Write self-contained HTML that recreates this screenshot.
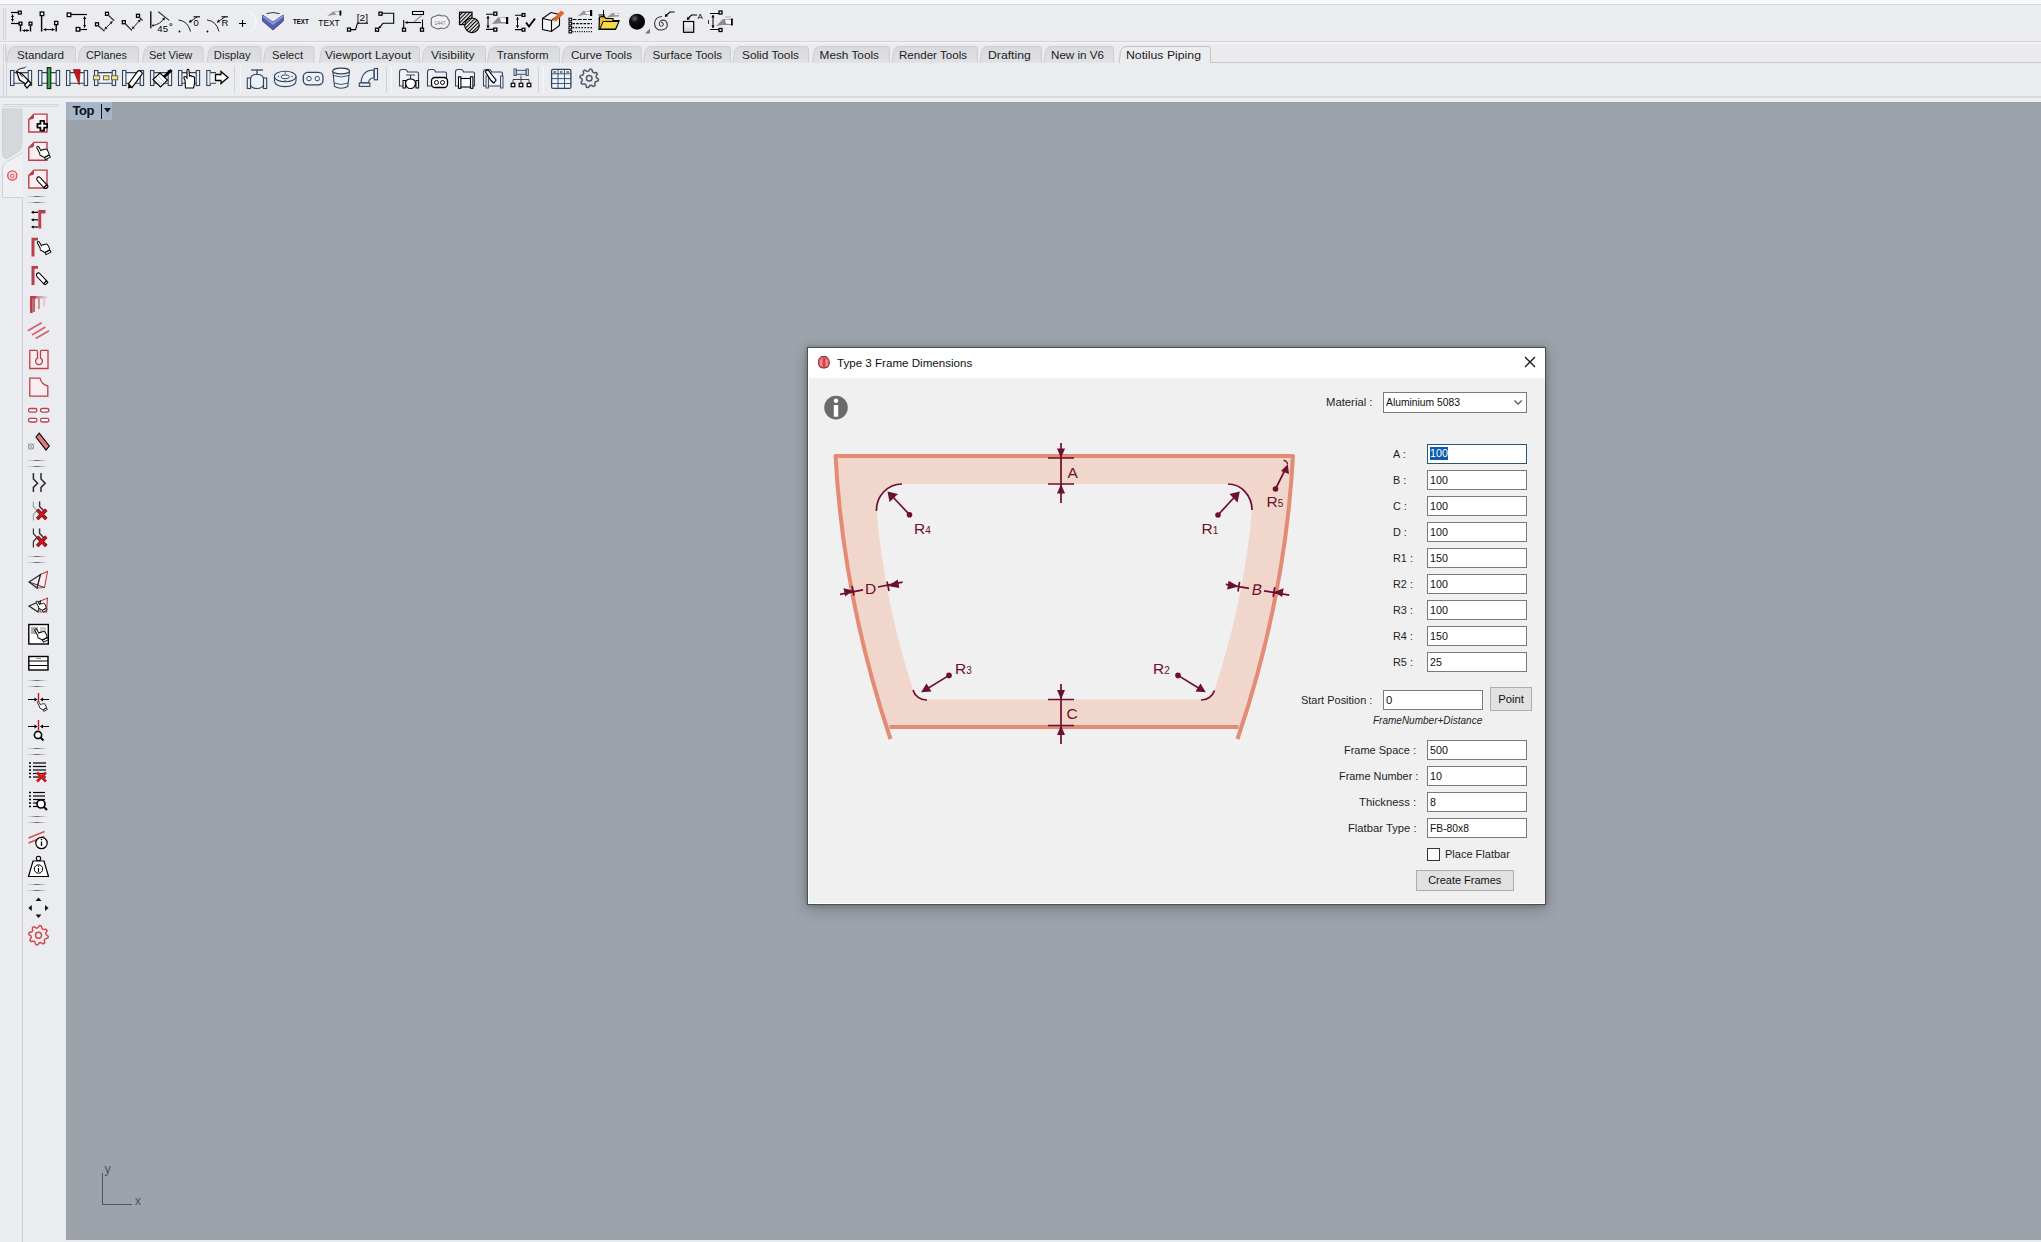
<!DOCTYPE html>
<html><head><meta charset="utf-8">
<style>
*{margin:0;padding:0;box-sizing:border-box}
html,body{width:2041px;height:1242px;overflow:hidden}
body{position:relative;background:#ebecf0;font-family:"Liberation Sans",sans-serif;color:#1a1a1a}
.a{position:absolute}
.tab{position:absolute;top:46px;height:16px;font-size:11.6px;line-height:16px;color:#202020;background:linear-gradient(#dfe0e4,#e3e4e8);border:1px solid #d3d4d8;border-bottom:none;border-radius:4px 4px 0 0;white-space:nowrap}
.tab span{position:absolute;top:0}
.lbl{position:absolute;font-size:11.3px;line-height:14px;color:#1e1e1e;white-space:nowrap}
.tb{position:absolute;background:#fff;border:1px solid #7a7a7a;height:20px;font-size:11.3px;line-height:18px;padding-left:2px;color:#111;white-space:nowrap}
.btn{position:absolute;background:#e1e1e1;border:1px solid #adadad;font-size:11.3px;line-height:18px;text-align:center;color:#111}
svg{position:absolute;overflow:visible}
</style></head><body>
<!-- top white strip -->
<div class="a" style="left:0;top:0;width:2041px;height:4px;background:#f7f8fa"></div>
<div class="a" style="left:0;top:4px;width:2041px;height:1px;background:#d6d7dc"></div>
<!-- row1 panel -->
<div class="a" style="left:0;top:5px;width:2041px;height:36px;background:#ebecf0"></div>
<div class="a" style="left:0;top:41px;width:2041px;height:1px;background:#d4d5da"></div>
<div class="a" style="left:0;top:42px;width:2041px;height:2px;background:#f1f2f5"></div>
<div class="a" style="left:3px;top:8px;width:1px;height:32px;background:#d2d3d8"></div>
<div class="a" style="left:5px;top:8px;width:1px;height:32px;background:#d2d3d8"></div>
<!-- tab strip -->
<div class="a" style="left:0;top:44px;width:2041px;height:18px;background:#ebebed"></div>
<!-- row2 panel -->
<div class="a" style="left:6px;top:63px;width:2035px;height:33px;background:#ebecf0;border-left:1px solid #d4d5da;border-radius:0 0 0 3px"></div>
<div class="a" style="left:6px;top:47px;width:1px;height:16px;background:#d4d5da"></div>
<div class="a" style="left:3px;top:63px;width:1px;height:33px;background:#d2d3d8"></div>
<div class="a" style="left:0;top:96px;width:2041px;height:2px;background:#d8d9dd"></div>
<div class="a" style="left:0;top:98px;width:2041px;height:4px;background:#eceef3"></div>

<!-- viewport -->
<div class="a" style="left:66px;top:102px;width:1975px;height:1138px;background:#9da3ab;border-top:1px solid #969da6"></div>
<div class="a" style="left:0;top:1240px;width:2041px;height:2px;background:#e8ebf2"></div>
<!-- sidebar -->
<div class="a" style="left:0;top:101px;width:66px;height:1141px;background:#ebecf0"></div>
<div class="a" style="left:3px;top:104px;width:56px;height:1px;background:#d2d3d8"></div>
<div class="a" style="left:3px;top:106px;width:56px;height:1px;background:#d8d9de"></div>
<div class="a" style="left:22px;top:197px;width:1px;height:1045px;background:#c9ccd6"></div>
<!-- Top label -->
<div class="a" style="left:66px;top:102px;width:46px;height:18px;background:linear-gradient(90deg,#a2adba,#a7b6c9 15%,#a7b6c9)"></div>
<div class="a" style="left:72.5px;top:103px;font-size:13px;font-weight:bold;line-height:16px;color:#0a0f1c;letter-spacing:-0.5px">Top</div>
<div class="a" style="left:101px;top:104px;width:1px;height:15px;background:#0e1525"></div>
<svg style="left:104px;top:108px" width="8" height="6"><path d="M0,0 L7,0 L3.5,4.5Z" fill="#0e1525"/></svg>
<!-- axis -->
<svg style="left:96px;top:1160px" width="50" height="50"><path d="M6.5,13 V44.5 H36" stroke="#50555c" stroke-width="1" fill="none"/><text x="8.6" y="13.3" font-size="12.8" fill="#50555c" font-family="Liberation Sans">y</text><text x="38.8" y="44.8" font-size="12.8" fill="#50555c" font-family="Liberation Sans">x</text></svg>

<!-- TABS -->
<svg style="left:0;top:40px" width="2041" height="30">
<defs><linearGradient id="tg" x1="0" y1="0" x2="0" y2="1"><stop offset="0" stop-color="#d9dadd"/><stop offset="1" stop-color="#e0e1e4"/></linearGradient></defs>
<path d="M3.5,4 V22 M5.5,4 V22" stroke="#d3d4d9" stroke-width="1"/>
<path d="M7,22.8 L8.5,12 Q10,6.5 15,6.5 H73 Q75.5,6.5 75.5,9.5 V22.8" fill="url(#tg)" stroke="#cdced3" stroke-width="1"/>
<path d="M78,22.8 L79.5,12 Q81,6.5 86,6.5 H136 Q138.5,6.5 138.5,9.5 V22.8" fill="url(#tg)" stroke="#cdced3" stroke-width="1"/>
<path d="M142.5,22.8 L144.0,12 Q145.5,6.5 150.5,6.5 H200.5 Q203.0,6.5 203.0,9.5 V22.8" fill="url(#tg)" stroke="#cdced3" stroke-width="1"/>
<path d="M207,22.8 L208.5,12 Q210,6.5 215,6.5 H258.5 Q261.0,6.5 261.0,9.5 V22.8" fill="url(#tg)" stroke="#cdced3" stroke-width="1"/>
<path d="M263.5,22.8 L265.0,12 Q266.5,6.5 271.5,6.5 H311.5 Q314.0,6.5 314.0,9.5 V22.8" fill="url(#tg)" stroke="#cdced3" stroke-width="1"/>
<path d="M319.5,22.8 L321.0,12 Q322.5,6.5 327.5,6.5 H417 Q419.5,6.5 419.5,9.5 V22.8" fill="url(#tg)" stroke="#cdced3" stroke-width="1"/>
<path d="M422,22.8 L423.5,12 Q425,6.5 430,6.5 H483 Q485.5,6.5 485.5,9.5 V22.8" fill="url(#tg)" stroke="#cdced3" stroke-width="1"/>
<path d="M487.5,22.8 L489.0,12 Q490.5,6.5 495.5,6.5 H557 Q559.5,6.5 559.5,9.5 V22.8" fill="url(#tg)" stroke="#cdced3" stroke-width="1"/>
<path d="M562,22.8 L563.5,12 Q565,6.5 570,6.5 H638.8 Q641.3,6.5 641.3,9.5 V22.8" fill="url(#tg)" stroke="#cdced3" stroke-width="1"/>
<path d="M643.5,22.8 L645.0,12 Q646.5,6.5 651.5,6.5 H728 Q730.5,6.5 730.5,9.5 V22.8" fill="url(#tg)" stroke="#cdced3" stroke-width="1"/>
<path d="M733,22.8 L734.5,12 Q736,6.5 741,6.5 H806 Q808.5,6.5 808.5,9.5 V22.8" fill="url(#tg)" stroke="#cdced3" stroke-width="1"/>
<path d="M812.5,22.8 L814.0,12 Q815.5,6.5 820.5,6.5 H887 Q889.5,6.5 889.5,9.5 V22.8" fill="url(#tg)" stroke="#cdced3" stroke-width="1"/>
<path d="M892,22.8 L893.5,12 Q895,6.5 900,6.5 H975 Q977.5,6.5 977.5,9.5 V22.8" fill="url(#tg)" stroke="#cdced3" stroke-width="1"/>
<path d="M980,22.8 L981.5,12 Q983,6.5 988,6.5 H1039 Q1041.5,6.5 1041.5,9.5 V22.8" fill="url(#tg)" stroke="#cdced3" stroke-width="1"/>
<path d="M1044,22.8 L1045.5,12 Q1047,6.5 1052,6.5 H1111 Q1113.5,6.5 1113.5,9.5 V22.8" fill="url(#tg)" stroke="#cdced3" stroke-width="1"/>
<path d="M1119,22.8 L1120.5,12 Q1122,6.5 1127,6.5 H1208 Q1210.5,6.5 1210.5,9.5 V22.8" fill="#ebecf0" stroke="#c4c5cb" stroke-width="1"/>
<path d="M1210.5,22.5 H2041" stroke="#c6c7cd" stroke-width="1"/>
<text x="17" y="18.6" font-size="11.8" fill="#1c1c1c" font-family="Liberation Sans" textLength="47.0" lengthAdjust="spacingAndGlyphs">Standard</text>
<text x="86" y="18.6" font-size="11.8" fill="#1c1c1c" font-family="Liberation Sans" textLength="41.0" lengthAdjust="spacingAndGlyphs">CPlanes</text>
<text x="149" y="18.6" font-size="11.8" fill="#1c1c1c" font-family="Liberation Sans" textLength="43.3" lengthAdjust="spacingAndGlyphs">Set View</text>
<text x="213.8" y="18.6" font-size="11.8" fill="#1c1c1c" font-family="Liberation Sans" textLength="36.8" lengthAdjust="spacingAndGlyphs">Display</text>
<text x="272" y="18.6" font-size="11.8" fill="#1c1c1c" font-family="Liberation Sans" textLength="31.0" lengthAdjust="spacingAndGlyphs">Select</text>
<text x="325" y="18.6" font-size="11.8" fill="#1c1c1c" font-family="Liberation Sans" textLength="86.0" lengthAdjust="spacingAndGlyphs">Viewport Layout</text>
<text x="431" y="18.6" font-size="11.8" fill="#1c1c1c" font-family="Liberation Sans" textLength="43.5" lengthAdjust="spacingAndGlyphs">Visibility</text>
<text x="496.7" y="18.6" font-size="11.8" fill="#1c1c1c" font-family="Liberation Sans" textLength="51.9" lengthAdjust="spacingAndGlyphs">Transform</text>
<text x="571" y="18.6" font-size="11.8" fill="#1c1c1c" font-family="Liberation Sans" textLength="61.0" lengthAdjust="spacingAndGlyphs">Curve Tools</text>
<text x="652.5" y="18.6" font-size="11.8" fill="#1c1c1c" font-family="Liberation Sans" textLength="69.5" lengthAdjust="spacingAndGlyphs">Surface Tools</text>
<text x="742" y="18.6" font-size="11.8" fill="#1c1c1c" font-family="Liberation Sans" textLength="57.0" lengthAdjust="spacingAndGlyphs">Solid Tools</text>
<text x="819.6" y="18.6" font-size="11.8" fill="#1c1c1c" font-family="Liberation Sans" textLength="59.4" lengthAdjust="spacingAndGlyphs">Mesh Tools</text>
<text x="899" y="18.6" font-size="11.8" fill="#1c1c1c" font-family="Liberation Sans" textLength="68.0" lengthAdjust="spacingAndGlyphs">Render Tools</text>
<text x="988" y="18.6" font-size="11.8" fill="#1c1c1c" font-family="Liberation Sans" textLength="42.8" lengthAdjust="spacingAndGlyphs">Drafting</text>
<text x="1051" y="18.6" font-size="11.8" fill="#1c1c1c" font-family="Liberation Sans" textLength="53.0" lengthAdjust="spacingAndGlyphs">New in V6</text>
<text x="1126" y="18.6" font-size="11.8" fill="#1c1c1c" font-family="Liberation Sans" textLength="75.0" lengthAdjust="spacingAndGlyphs">Notilus Piping</text>
</svg>
<!-- /TABS -->

<!-- DIALOG -->
<div class="a" style="left:807px;top:347px;width:739px;height:558px;background:#f0f0f0;border:1px solid #4a5056;box-shadow:0 4px 14px rgba(35,40,50,.32),0 0 4px rgba(35,40,50,.35)"></div>
<div class="a" style="left:808px;top:348px;width:737px;height:30px;background:#fff"></div>
<div class="a" style="left:808px;top:378px;width:1px;height:525px;background:#fff"></div>
<div class="a" style="left:808px;top:903px;width:737px;height:1px;background:#fff"></div>
<div class="a" style="left:837px;top:355px;font-size:11.6px;line-height:15px;color:#111">Type 3 Frame Dimensions</div>
<svg style="left:1524px;top:356px" width="12" height="12"><path d="M1,1 L11,11 M11,1 L1,11" stroke="#111" stroke-width="1.3"/></svg>

<!-- ICONS1 -->
<svg style="left:0;top:0" width="2041" height="100">
<path d="M11,12.5 H18.5" stroke="#000" stroke-width="1.2" fill="none" />
<rect x="18.40" y="11.20" width="2.8" height="2.8" fill="#fff" stroke="#000" stroke-width="1.3"/>
<path d="M12.5,14.5 L12.5,21.5" stroke="#000" stroke-width="1" fill="none" />
<path d="M12.50,21.50 L10.90,18.90 L14.10,18.90Z" fill="#000"/>
<path d="M12.50,14.50 L14.10,17.10 L10.90,17.10Z" fill="#000"/>
<path d="M11,23.5 H19" stroke="#000" stroke-width="1.2" fill="none" />
<rect x="19.10" y="22.20" width="2.8" height="2.8" fill="#fff" stroke="#000" stroke-width="1.3"/>
<path d="M20.5,25 V31.5" stroke="#000" stroke-width="1.4" fill="none" />
<path d="M22.5,30.5 L29,30.5" stroke="#000" stroke-width="1" fill="none" />
<path d="M29.00,30.50 L26.40,32.10 L26.40,28.90Z" fill="#000"/>
<path d="M22.50,30.50 L25.10,28.90 L25.10,32.10Z" fill="#000"/>
<rect x="29.10" y="22.20" width="2.8" height="2.8" fill="#fff" stroke="#000" stroke-width="1.3"/>
<path d="M30.5,25 V31.5" stroke="#000" stroke-width="1.4" fill="none" />
<rect x="40.20" y="12.00" width="3.6" height="3.6" fill="#fff" stroke="#000" stroke-width="1.3"/>
<path d="M41.6,15.6 V31.5" stroke="#000" stroke-width="1.4" fill="none" />
<rect x="54.60" y="21.40" width="3.2" height="3.2" fill="#fff" stroke="#000" stroke-width="1.3"/>
<path d="M56.2,24.8 V31.5" stroke="#000" stroke-width="1.4" fill="none" />
<path d="M43.5,29.6 L54.5,29.6" stroke="#000" stroke-width="1" fill="none" />
<path d="M54.50,29.60 L51.90,31.20 L51.90,28.00Z" fill="#000"/>
<path d="M43.50,29.60 L46.10,28.00 L46.10,31.20Z" fill="#000"/>
<rect x="67.20" y="13.00" width="3.6" height="3.6" fill="#fff" stroke="#000" stroke-width="1.3"/>
<path d="M71,14.5 H87" stroke="#000" stroke-width="1.2" fill="none" />
<path d="M84.6,16.5 L84.6,27.5" stroke="#000" stroke-width="1" fill="none" />
<path d="M84.60,27.50 L83.00,24.90 L86.20,24.90Z" fill="#000"/>
<path d="M84.60,16.50 L86.20,19.10 L83.00,19.10Z" fill="#000"/>
<rect x="76.20" y="27.50" width="3.6" height="3.6" fill="#fff" stroke="#000" stroke-width="1.3"/>
<path d="M80,29.5 H87" stroke="#000" stroke-width="1.2" fill="none" />
<rect x="95.50" y="22.80" width="3" height="3" fill="#fff" stroke="#000" stroke-width="1.3"/>
<rect x="105.50" y="12.30" width="3" height="3" fill="#fff" stroke="#000" stroke-width="1.3"/>
<path d="M98,25.5 L104.5,31.3" stroke="#333" stroke-width="1.2" fill="none" />
<path d="M108,15 L114.2,20.8" stroke="#333" stroke-width="1.2" fill="none" />
<path d="M104.5,29.5 L112.5,21.2" stroke="#222" stroke-width="1" fill="none" />
<path d="M112.50,21.20 L111.85,24.18 L109.54,21.96Z" fill="#222"/>
<path d="M104.50,29.50 L105.15,26.52 L107.46,28.74Z" fill="#222"/>
<rect x="122.30" y="20.70" width="3" height="3" fill="#fff" stroke="#000" stroke-width="1.3"/>
<rect x="136.50" y="14.30" width="3" height="3" fill="#fff" stroke="#000" stroke-width="1.3"/>
<path d="M125,23.5 L132,30.5" stroke="#333" stroke-width="1.2" fill="none" />
<path d="M139,17 L142.6,20.5" stroke="#333" stroke-width="1.2" fill="none" />
<path d="M132,29 L140.5,19.5" stroke="#222" stroke-width="1" fill="none" />
<path d="M140.50,19.50 L139.96,22.50 L137.57,20.37Z" fill="#222"/>
<path d="M132.00,29.00 L132.54,26.00 L134.93,28.13Z" fill="#222"/>
<path d="M150.8,11.2 V28.3" stroke="#000" stroke-width="1.3" fill="none" />
<path d="M158.3,11.7 L169.2,20.4" stroke="#333" stroke-width="1.2" fill="none" />
<path d="M153,25.5 Q160,24.5 164.5,18" stroke="#222" stroke-width="1" fill="none"/>
<path d="M164.80,17.60 L164.46,20.50 L162.09,18.67Z" fill="#000"/>
<circle cx="153" cy="25.5" r="0.9" fill="#000"/>
<text x="157.3" y="32.2" font-size="9.6" fill="#000" font-weight="normal" font-family="Liberation Sans" >45</text>
<circle cx="170.8" cy="24.6" r="1.1" fill="none" stroke="#000" stroke-width="0.7"/>
<path d="M178.5,20 Q188,21 190.5,31.5" stroke="#222" stroke-width="1" fill="none"/>
<circle cx="179.5" cy="31.5" r="0.9" fill="#000"/>
<path d="M197,17 L189.5,22" stroke="#222" stroke-width="1" fill="none" />
<path d="M188.80,22.50 L190.24,19.62 L192.02,22.28Z" fill="#000"/>
<path d="M193.5,16.8 H200" stroke="#000" stroke-width="1.1" fill="none" />
<text x="193.6" y="26" font-size="9.5" fill="#000" font-weight="normal" font-family="Liberation Sans" >0</text>
<path d="M207,20 Q216.5,21 219,31.5" stroke="#222" stroke-width="1" fill="none"/>
<circle cx="207.5" cy="31.5" r="0.9" fill="#000"/>
<path d="M225,17 L217.5,22" stroke="#222" stroke-width="1" fill="none" />
<path d="M216.80,22.50 L218.24,19.62 L220.02,22.28Z" fill="#000"/>
<path d="M221.5,16.8 H228" stroke="#000" stroke-width="1.1" fill="none" />
<text x="221.6" y="26" font-size="9.5" fill="#000" font-weight="normal" font-family="Liberation Sans" >R</text>
<path d="M239,23.5 H246 M242.5,20 V27" stroke="#000" stroke-width="1.1" fill="none" />
<path d="M250,12.5 A10,10 0 0 1 250,31" stroke="#f6f7f9" stroke-width="1.5" fill="none"/>
<path d="M262.5,15 L273,22 L283.3,15 L283.3,21 L273,30 L262.5,21 Z" fill="#5561b0" stroke="#2e3580" stroke-width="0.8"/>
<path d="M262.5,15 L273,22 L283.3,15 L283.3,17 L273,25 L262.5,17 Z" fill="#8e97d6"/>
<path d="M266.5,13.6 Q273,11.5 279.5,13.6" stroke="#000" stroke-width="0.8" fill="none"/>
<text x="293" y="24" font-size="7.2" fill="#000" font-weight="bold" font-family="Liberation Sans" textLength="15.7" lengthAdjust="spacingAndGlyphs">TEXT</text>
<text x="318.3" y="26" font-size="9.8" fill="#000" font-weight="normal" font-family="Liberation Sans" textLength="21.3" lengthAdjust="spacingAndGlyphs">TEXT</text>
<path d="M327,16 L333,11.5 L340,11.5 L340,15 L333,15 Z" fill="#9a9a9a"/><path d="M335,12 L340,12.5 L341,15 L336,14.5Z" fill="#fff"/><rect x="339.5" y="10.5" width="1.8" height="5" fill="#000"/>
<rect x="347.50" y="28.10" width="3" height="3" fill="#fff" stroke="#000" stroke-width="1.3"/>
<path d="M350.5,29.6 H355.5 L357.5,23.2 H368" stroke="#000" stroke-width="1.1" fill="none" />
<text x="356.8" y="21" font-size="9.4" fill="#000" font-weight="normal" font-family="Liberation Sans" textLength="11.2" lengthAdjust="spacingAndGlyphs">[2]</text>
<rect x="379.00" y="12.20" width="3" height="3" fill="#fff" stroke="#000" stroke-width="1.3"/>
<path d="M382,13.2 H393.7 V23.3 H383 L379,28" stroke="#000" stroke-width="1.1" fill="none" />
<path d="M378.50,28.50 L379.21,25.67 L381.33,27.79Z" fill="#000"/>
<rect x="375.50" y="28.20" width="3" height="3" fill="#fff" stroke="#000" stroke-width="1.3"/>
<path d="M403.7,20 V28" stroke="#000" stroke-width="1.1" fill="none" />
<rect x="402.50" y="28.20" width="3" height="3" fill="#fff" stroke="#000" stroke-width="1.3"/>
<path d="M405.5,22.5 H421" stroke="#000" stroke-width="1.1" fill="none" />
<path d="M405.00,22.50 L407.50,20.90 L407.50,24.10Z" fill="#000"/>
<rect x="412.5" y="11.5" width="11" height="3" fill="#fff" stroke="#000" stroke-width="1.1"/>
<path d="M421.5,15.5 L414,22" stroke="#999" stroke-width="1.3" fill="none" />
<path d="M422.5,19.5 V28.5" stroke="#000" stroke-width="1.1" fill="none" />
<rect x="420.50" y="28.20" width="3" height="3" fill="#fff" stroke="#000" stroke-width="1.3"/>
<path d="M434,27.5 Q430,26 431.5,22 Q430,17 435,16.5 Q438,14 442,16 Q447,15 448,19 Q451,22 448,26 Q446,29.5 441,28 Q438,30 434,27.5 Z" fill="#f0f1f4" stroke="#6e6e6e" stroke-width="1.1"/>
<text x="434.5" y="24.8" font-size="5.6" fill="#777" font-weight="normal" font-family="Liberation Sans" textLength="11" lengthAdjust="spacingAndGlyphs">1447</text>
<defs><pattern id="ht" width="2.6" height="2.6" patternUnits="userSpaceOnUse" patternTransform="rotate(45)"><rect width="1.1" height="2.6" fill="#000"/></pattern></defs>
<rect x="459.5" y="12.2" width="12.5" height="12.4" fill="#f3f3f3" stroke="#000" stroke-width="1.2"/>
<rect x="459.5" y="12.2" width="12.5" height="12.4" fill="url(#ht)"/>
<circle cx="472" cy="25.3" r="7.3" fill="#f3f3f3" stroke="#000" stroke-width="1.1"/><circle cx="472" cy="25.3" r="7.3" fill="url(#ht)"/>
<path d="M486,14.3 H495.5 M486,29.4 H495.5" stroke="#000" stroke-width="1.1" fill="none" />
<rect x="493.80" y="12.20" width="3" height="3" fill="#fff" stroke="#000" stroke-width="1.3"/>
<rect x="493.80" y="28.10" width="3" height="3" fill="#fff" stroke="#000" stroke-width="1.3"/>
<path d="M488,16 L488,28" stroke="#000" stroke-width="1" fill="none" />
<path d="M488.00,28.00 L486.40,25.40 L489.60,25.40Z" fill="#000"/>
<path d="M488.00,16.00 L489.60,18.60 L486.40,18.60Z" fill="#000"/>
<path d="M492,24 L498,17.5 L506,17.5 L506,23.5 L498,23.5 Z" fill="#8d8d8d"/><path d="M500,18 L506,18.5 L506,22 L501,22Z" fill="#fff"/><rect x="506" y="17" width="2.2" height="7" fill="#000"/>
<path d="M515,15.3 H523.5 M515,29.6 H523.5" stroke="#000" stroke-width="1.1" fill="none" />
<rect x="522.10" y="13.60" width="2.8" height="2.8" fill="#fff" stroke="#000" stroke-width="1.3"/>
<rect x="522.10" y="28.30" width="2.8" height="2.8" fill="#fff" stroke="#000" stroke-width="1.3"/>
<path d="M517.5,17 L517.5,28" stroke="#000" stroke-width="1" fill="none" />
<path d="M517.50,28.00 L515.90,25.40 L519.10,25.40Z" fill="#000"/>
<path d="M517.50,17.00 L519.10,19.60 L515.90,19.60Z" fill="#000"/>
<path d="M526,22.5 L529,26.5 L535,18.5" stroke="#000" stroke-width="1.9" fill="none" />
<path d="M542.5,18.5 L551,12.5 L559.5,14.5 L559.5,25.5 L551.5,31.5 L542.5,29.5 Z" fill="#f2f3f6" stroke="#000" stroke-width="1.1"/>
<path d="M542.5,18.5 L551.5,20.5 L559.5,14.5 M551.5,20.5 V31.5" stroke="#000" stroke-width="1.1" fill="none" />
<path d="M553,19.5 L561,10.5 L564.5,13 L556,21.5 Z" fill="#e2691f"/><path d="M553,19.5 L556,21.5 L552.5,22.5Z" fill="#f2c38a"/>
<rect x="569.00" y="18.20" width="2.6" height="2.6" fill="#fff" stroke="#000" stroke-width="1.1"/>
<path d="M572.5,19.5 H592" stroke="#000" stroke-width="1.2" stroke-dasharray="4,1.2"/>
<rect x="569.00" y="22.30" width="2.6" height="2.6" fill="#fff" stroke="#000" stroke-width="1.1"/>
<path d="M572.5,23.6 H592" stroke="#000" stroke-width="1.2" stroke-dasharray="2.5,1.2"/>
<rect x="569.00" y="26.30" width="2.6" height="2.6" fill="#fff" stroke="#000" stroke-width="1.1"/>
<path d="M572.5,27.6 H592" stroke="#000" stroke-width="1.2" stroke-dasharray="1.6,1.4"/>
<rect x="569.00" y="30.30" width="2.6" height="2.6" fill="#fff" stroke="#000" stroke-width="1.1"/>
<path d="M572.5,31.6 H592" stroke="#000" stroke-width="1.2" stroke-dasharray="1,1.3"/>
<path d="M577.5,16.5 L583,11 L590,11 L590,15 L583,15 Z" fill="#9a9a9a"/><path d="M585,11.5 L590,12 L590,14.5 L586,14Z" fill="#fff"/><rect x="590" y="10" width="2.2" height="6" fill="#000"/>
<path d="M603.5,10 V25 M598.5,15 H605 M598.5,19 H603" stroke="#000" stroke-width="1" fill="none" />
<path d="M599,29.5 L599.5,17 L604,16.5 L606,18.5 L613,18.5 L613,20.5 L619,20.5 L615.5,29.5 Z" fill="#e9c23a" stroke="#000" stroke-width="1.2"/>
<path d="M600,29 L603,21.5 L619,21.5 L615.5,29 Z" fill="#f6d94a" stroke="#000" stroke-width="1"/>
<path d="M606,18 L612,13 L619,13 L619,16.5 L612,17 Z" fill="#9a9a9a"/><path d="M614,13.5 Q619,12.5 619,15 L615,15Z" fill="#fff"/>
<defs><radialGradient id="sph" cx="0.35" cy="0.3" r="0.7"><stop offset="0" stop-color="#6a6a6a"/><stop offset="0.35" stop-color="#111"/><stop offset="1" stop-color="#000"/></radialGradient></defs>
<circle cx="637" cy="21.7" r="8" fill="url(#sph)"/>
<path d="M650,28.5 L650,33.5 L645,33.5 Z" fill="#777"/>
<path d="M661,21 Q665,18.5 667,23 Q668.5,29 662,30 Q655,30.5 654.5,23.5 Q655,17 662,16.5" stroke="#333" stroke-width="1.1" fill="none"/>
<path d="M661,22.5 Q663.5,22 663.5,25 Q662,27.5 659.5,25.5 Q658.5,23 660.5,20.5" stroke="#333" stroke-width="1" fill="none"/>
<path d="M674.5,12 H670 L665.5,16" stroke="#000" stroke-width="1.1" fill="none" />
<path d="M664.80,17.00 L665.58,13.82 L667.98,16.22Z" fill="#000"/>
<defs><linearGradient id="sqg" x1="0" y1="0" x2="0" y2="1"><stop offset="0" stop-color="#fafafa"/><stop offset="1" stop-color="#cfcfcf"/></linearGradient></defs>
<rect x="683.5" y="21.5" width="10.2" height="10.8" fill="url(#sqg)" stroke="#000" stroke-width="1.2"/>
<path d="M697,15 H691.5 L687.5,19" stroke="#000" stroke-width="1.1" fill="none" />
<path d="M686.80,20.00 L687.58,16.82 L689.98,19.22Z" fill="#000"/>
<text x="697.5" y="19.3" font-size="7.8" fill="#000" font-weight="normal" font-family="Liberation Sans" textLength="5.2" lengthAdjust="spacingAndGlyphs">A</text>
<path d="M710,13.5 H720 M710,29.5 H720" stroke="#000" stroke-width="1.1" fill="none" />
<rect x="719.00" y="11.00" width="3" height="3" fill="#fff" stroke="#000" stroke-width="1.3"/>
<rect x="719.00" y="28.50" width="3" height="3" fill="#fff" stroke="#000" stroke-width="1.3"/>
<path d="M713,15 L713,28" stroke="#000" stroke-width="1" fill="none" />
<path d="M713.00,28.00 L711.40,25.40 L714.60,25.40Z" fill="#000"/>
<path d="M713.00,15.00 L714.60,17.60 L711.40,17.60Z" fill="#000"/>
<path d="M708.5,20 V24" stroke="#000" stroke-width="0.8" fill="none" />
<path d="M716,26 L723,19 L731,19 L731,25 L723,25 Z" fill="#8d8d8d"/><path d="M725,19.5 L731,20 L731,24 L726,23.5Z" fill="#fff"/>
<path d="M725,17 H731" stroke="#999" stroke-width="0.8" fill="none" />
<rect x="731" y="18.5" width="1.8" height="7" fill="#000"/>
</svg>
<!-- /ICONS1 -->
<!-- ICONS2 -->
<svg style="left:0;top:0" width="2041" height="100">
<rect x="13.8" y="72.6" width="14.2" height="10.6" fill="#f1f5fa" stroke="none"/>
<path d="M13.8,72.6 H28 M13.8,83.2 H28" stroke="#34435a" stroke-width="1.1"/>
<rect x="10.5" y="70.5" width="3.4" height="15" fill="#e9f2fb" stroke="#34435a" stroke-width="1.1"/>
<rect x="28.2" y="70.5" width="3.4" height="15" fill="#e9f2fb" stroke="#34435a" stroke-width="1.1"/>
<path d="M17,72 Q17,69 21,68.5 Q26,68 26,66.5" stroke="#111" stroke-width="0.9" fill="none"/>
<path d="M16.5,71.5 L22,74 L28.5,80.5 L26,84 L19.5,80 Z" fill="#fff" stroke="#000" stroke-width="1.2"/>
<path d="M28.5,80.5 L31,83.5 L27,88 L24.5,85 Z" fill="#fff" stroke="#000" stroke-width="1.2"/>
<path d="M19.5,73.5 L22.5,77" stroke="#000" stroke-width="0.9" fill="none"/>
<rect x="41.8" y="72.6" width="14.200000000000003" height="10.6" fill="#f1f5fa" stroke="none"/>
<path d="M41.8,72.6 H56 M41.8,83.2 H56" stroke="#34435a" stroke-width="1.1"/>
<rect x="38.5" y="70.5" width="3.4" height="15" fill="#e9f2fb" stroke="#34435a" stroke-width="1.1"/>
<rect x="56.2" y="70.5" width="3.4" height="15" fill="#e9f2fb" stroke="#34435a" stroke-width="1.1"/>
<rect x="47.2" y="67.6" width="3.6" height="21" fill="#3c9f4c" stroke="#0b250d" stroke-width="1.1"/>
<rect x="69.8" y="72.6" width="14.200000000000003" height="10.6" fill="#f1f5fa" stroke="none"/>
<path d="M69.8,72.6 H84 M69.8,83.2 H84" stroke="#34435a" stroke-width="1.1"/>
<rect x="66.5" y="70.5" width="3.4" height="15" fill="#e9f2fb" stroke="#34435a" stroke-width="1.1"/>
<rect x="84.2" y="70.5" width="3.4" height="15" fill="#e9f2fb" stroke="#34435a" stroke-width="1.1"/>
<path d="M73.2,69.6 L80.2,69.6 L79.2,84.8 Z" fill="#c5121b" stroke="#7a0a0f" stroke-width="0.6"/>
<rect x="97.8" y="72.6" width="14.200000000000003" height="10.6" fill="#f1f5fa" stroke="none"/>
<path d="M97.8,72.6 H112 M97.8,83.2 H112" stroke="#34435a" stroke-width="1.1"/>
<rect x="94.5" y="70.5" width="3.4" height="15" fill="#e9f2fb" stroke="#34435a" stroke-width="1.1"/>
<rect x="112.2" y="70.5" width="3.4" height="15" fill="#e9f2fb" stroke="#34435a" stroke-width="1.1"/>
<rect x="93.5" y="75.8" width="6.2" height="4" fill="#eeea98" stroke="#5a5a3a" stroke-width="0.9"/>
<rect x="103.5" y="75.8" width="5.5" height="4" fill="#eeea98" stroke="#5a5a3a" stroke-width="0.9"/>
<rect x="111.5" y="75.8" width="6.2" height="4" fill="#eeea98" stroke="#5a5a3a" stroke-width="0.9"/>
<rect x="125.8" y="72.6" width="14.200000000000003" height="10.6" fill="#f1f5fa" stroke="none"/>
<path d="M125.8,72.6 H140 M125.8,83.2 H140" stroke="#34435a" stroke-width="1.1"/>
<rect x="122.5" y="70.5" width="3.4" height="15" fill="#e9f2fb" stroke="#34435a" stroke-width="1.1"/>
<rect x="140.2" y="70.5" width="3.4" height="15" fill="#e9f2fb" stroke="#34435a" stroke-width="1.1"/>
<path d="M128.5,84 L137.5,71.5 Q139,70 140.5,71 L142,72.5 Q142.5,74 141.5,75 L132,87.5 Z" fill="#fff" stroke="#000" stroke-width="1.2"/>
<path d="M128.5,84 L132,87.5 L128,88.5 Z" fill="#000"/>
<rect x="153.8" y="72.6" width="14.199999999999989" height="10.6" fill="#f1f5fa" stroke="none"/>
<path d="M153.8,72.6 H168 M153.8,83.2 H168" stroke="#34435a" stroke-width="1.1"/>
<rect x="150.5" y="70.5" width="3.4" height="15" fill="#e9f2fb" stroke="#34435a" stroke-width="1.1"/>
<rect x="168.2" y="70.5" width="3.4" height="15" fill="#e9f2fb" stroke="#34435a" stroke-width="1.1"/>
<path d="M153,79.5 L160,73 L167.5,80 L160.5,87 Z" fill="#fff" stroke="#000" stroke-width="1.2"/>
<path d="M155.5,78 L162.5,85 M158,76 L165,83" stroke="#999" stroke-width="0.7"/>
<path d="M163,76 L170.5,69 L172.5,71 L165,78 Z" fill="#000"/>
<rect x="181.8" y="72.6" width="14.199999999999989" height="10.6" fill="#f1f5fa" stroke="none"/>
<path d="M181.8,72.6 H196 M181.8,83.2 H196" stroke="#34435a" stroke-width="1.1"/>
<rect x="178.5" y="70.5" width="3.4" height="15" fill="#e9f2fb" stroke="#34435a" stroke-width="1.1"/>
<rect x="196.2" y="70.5" width="3.4" height="15" fill="#e9f2fb" stroke="#34435a" stroke-width="1.1"/>
<path d="M185.5,88 L185,80 Q183,77 184.5,76.5 Q186,76.5 187,78 L187,70 Q188,68.5 189,70 L189.5,76 Q191,75 192,76.5 Q193.5,76 194.5,77.5 L194.5,84 L193.5,88 Z" fill="#fff" stroke="#000" stroke-width="1.1"/>
<rect x="206.8" y="70.5" width="3.4" height="15" fill="#e9f2fb" stroke="#34435a" stroke-width="1.1"/>
<rect x="210.3" y="72.6" width="5.699999999999989" height="10.6" fill="#f1f5fa" stroke="none"/>
<path d="M210.3,72.6 H216 M210.3,83.2 H216" stroke="#34435a" stroke-width="1.1"/>
<path d="M215.5,74.5 H221 V71.5 L228,77.5 L221,83.5 V80.5 H215.5 Z" fill="#fff" stroke="#000" stroke-width="1.3"/>
<path d="M234.5,66 V93" stroke="#d2d3d8" stroke-width="1"/><path d="M240.5,66 V93" stroke="#f6f7f9" stroke-width="1"/>
<path d="M251,70 H263" stroke="#6b7383" stroke-width="1.8"/><path d="M257,70 V75" stroke="#34435a" stroke-width="1.3"/>
<path d="M250.5,79 Q251,75 255,74.5 H259 Q263,75 263.5,79 V85 Q262,88.5 257,88.5 Q252,88.5 250.5,85 Z" fill="#e9f2fb" stroke="#34435a" stroke-width="1.1"/>
<rect x="247.3" y="78" width="3.2" height="10.5" fill="#e9f2fb" stroke="#34435a" stroke-width="1.1"/><rect x="263.5" y="78" width="3.2" height="10.5" fill="#e9f2fb" stroke="#34435a" stroke-width="1.1"/>
<path d="M274.5,76.5 V81 Q275,86.5 285,86.6 Q295.5,86.5 296,81 V76.5" fill="#e9f2fb" stroke="#34435a" stroke-width="1.1"/>
<ellipse cx="285.2" cy="76.5" rx="10.8" ry="5.3" fill="#e9f2fb" stroke="#34435a" stroke-width="1.1"/>
<ellipse cx="285.2" cy="76.8" rx="4.2" ry="1.9" fill="#fff" stroke="#34435a" stroke-width="1"/>
<circle cx="285.2" cy="73" r="0.7" fill="#34435a"/>
<circle cx="278.5" cy="76.5" r="0.7" fill="#34435a"/>
<circle cx="292" cy="76.5" r="0.7" fill="#34435a"/>
<circle cx="285.2" cy="80.5" r="0.7" fill="#34435a"/>
<rect x="303.3" y="72.3" width="19.7" height="12.5" rx="4.5" fill="#e9f2fb" stroke="#34435a" stroke-width="1.3"/>
<circle cx="309" cy="78.6" r="2.2" fill="#fff" stroke="#34435a" stroke-width="1"/><circle cx="317.3" cy="78.6" r="2.2" fill="#fff" stroke="#34435a" stroke-width="1"/>
<path d="M332.8,71 L334.5,86.5 Q341,90 347.8,86.5 L349.5,71" fill="#e9f2fb" stroke="#34435a" stroke-width="1.1"/>
<ellipse cx="341.1" cy="71" rx="8.4" ry="2.9" fill="#f4f8fc" stroke="#34435a" stroke-width="1.1"/>
<path d="M333.3,75.5 Q341,78.5 349,75.5 M334,83 Q341,86 348.3,83" stroke="#34435a" stroke-width="0.9" fill="none"/>
<path d="M374,70 Q362,70 361,82.8 H368.5 Q369,78 374,77.8 Z" fill="#e9f2fb" stroke="#34435a" stroke-width="1.1"/>
<rect x="374.3" y="68.5" width="3.2" height="11.3" fill="#e9f2fb" stroke="#34435a" stroke-width="1.1"/><rect x="359.3" y="83" width="10.6" height="3.4" fill="#e9f2fb" stroke="#34435a" stroke-width="1.1"/>
<path d="M386.5,66 V93" stroke="#d2d3d8" stroke-width="1"/><path d="M391.5,66 V93" stroke="#f6f7f9" stroke-width="1"/>
<path d="M399.5,86 V72 Q399.5,69.5 402,69.5 H405 Q407,69.5 407.5,72 H417 Q418.5,72 418.5,73.5 V86 Z" fill="#eef2f8" stroke="#34435a" stroke-width="1.1"/>
<path d="M406,75 H415 M410.5,75 V79" stroke="#444" stroke-width="1.2"/>
<path d="M405.5,83 Q406,79 410.5,79 Q415,79 415.5,83 Q415,88.5 410.5,88.5 Q406,88.5 405.5,83Z" fill="#fff" stroke="#000" stroke-width="1.1"/>
<rect x="403" y="80.5" width="2.6" height="7.5" fill="#eee" stroke="#000" stroke-width="1"/><rect x="416" y="80.5" width="2.6" height="7.5" fill="#eee" stroke="#000" stroke-width="1"/>
<path d="M427.5,86 V72 Q427.5,69.5 430,69.5 H433 Q435,69.5 435.5,72 H445 Q446.5,72 446.5,73.5 V86 Z" fill="#eef2f8" stroke="#34435a" stroke-width="1.1"/>
<rect x="431.5" y="77.5" width="16" height="10" rx="3.5" fill="#fff" stroke="#000" stroke-width="1.3"/>
<circle cx="436.5" cy="82.5" r="2" fill="#fff" stroke="#000" stroke-width="1"/><circle cx="442.5" cy="82.5" r="2" fill="#fff" stroke="#000" stroke-width="1"/>
<path d="M455.5,86 V72 Q455.5,69.5 458,69.5 H461 Q463,69.5 463.5,72 H473 Q474.5,72 474.5,73.5 V86 Z" fill="#eef2f8" stroke="#34435a" stroke-width="1.1"/>
<rect x="459.5" y="78.5" width="12" height="8.5" fill="#fff" stroke="#000" stroke-width="1.1"/>
<rect x="458.5" y="76.8" width="2.4" height="11.5" fill="#fff" stroke="#000" stroke-width="1.1"/><rect x="470.5" y="76.8" width="2.4" height="11.5" fill="#fff" stroke="#000" stroke-width="1.1"/>
<path d="M483.5,86 V72 Q483.5,69.5 486,69.5 H489 Q491,69.5 491.5,72 H501 Q502.5,72 502.5,73.5 V86 Z" fill="#eef2f8" stroke="#34435a" stroke-width="1.1"/>
<rect x="486" y="76" width="2.5" height="12" fill="#d6e6f5" stroke="#34435a" stroke-width="0.9"/><rect x="500.5" y="76" width="2.5" height="12" fill="#d6e6f5" stroke="#34435a" stroke-width="0.9"/>
<path d="M485.5,72 Q486,69.5 488.5,70.5 L496,80 L494,83 Q492.5,82 491,80.5 Z" fill="#fff" stroke="#000" stroke-width="1.2"/>
<rect x="514" y="69" width="2.3" height="6.5" fill="#d6e6f5" stroke="#34435a" stroke-width="0.9"/><rect x="526" y="69" width="2.3" height="6.5" fill="#d6e6f5" stroke="#34435a" stroke-width="0.9"/>
<rect x="516.3" y="70.3" width="9.7" height="4" fill="#d6e6f5" stroke="#34435a" stroke-width="0.9"/>
<path d="M521,75.5 V79.5 M513,83 V79.5 H529 V83 M521,79.5 V83" stroke="#444" stroke-width="1" fill="none"/>
<rect x="511.2" y="83.3" width="3.6" height="3.4" fill="#fff" stroke="#000" stroke-width="1.2"/>
<rect x="519.2" y="83.3" width="3.6" height="3.4" fill="#fff" stroke="#000" stroke-width="1.2"/>
<rect x="527.2" y="83.3" width="3.6" height="3.4" fill="#fff" stroke="#000" stroke-width="1.2"/>
<path d="M538.5,66 V93" stroke="#d2d3d8" stroke-width="1"/><path d="M543.5,66 V93" stroke="#f6f7f9" stroke-width="1"/>
<rect x="551.6" y="69.4" width="19.3" height="19" rx="1.5" fill="#eaf2fb" stroke="#34435a" stroke-width="1.3"/>
<path d="M551.6,73.8 H571 M551.6,78.6 H571 M551.6,83.5 H571 M558,69.4 V88.4 M564.5,69.4 V88.4" stroke="#34435a" stroke-width="0.9"/>
<path d="M553.5,72 H556 M560,72 H562.5 M566.5,72 H569" stroke="#000" stroke-width="1.2"/>
<path d="M596.37,77.59 L598.46,79.21 L598.10,81.00 L595.55,81.69 L594.77,82.87 L595.10,85.49 L593.58,86.50 L591.29,85.19 L589.91,85.47 L588.29,87.56 L586.50,87.20 L585.81,84.65 L584.63,83.87 L582.01,84.20 L581.00,82.68 L582.31,80.39 L582.03,79.01 L579.94,77.39 L580.30,75.60 L582.85,74.91 L583.63,73.73 L583.30,71.11 L584.82,70.10 L587.11,71.41 L588.49,71.13 L590.11,69.04 L591.90,69.40 L592.59,71.95 L593.77,72.73 L596.39,72.40 L597.40,73.92 L596.09,76.21Z" fill="none" stroke="#4f5a6b" stroke-width="1.5" stroke-linejoin="round"/>
<circle cx="589.2" cy="78.3" r="2.8" fill="none" stroke="#4f5a6b" stroke-width="1.5"/>
</svg>
<!-- /ICONS2 -->
<!-- SIDE -->
<svg style="left:0;top:0" width="66" height="1242">
<defs><linearGradient id="sepg" gradientUnits="userSpaceOnUse" x1="26" x2="48" y1="0" y2="0"><stop offset="0" stop-color="#d5d6db" stop-opacity="0.2"/><stop offset="0.5" stop-color="#5e6068"/><stop offset="1" stop-color="#d5d6db" stop-opacity="0.2"/></linearGradient></defs>
<path d="M2.5,109 H22 V143 Q22,150 16,153 L8,158 Q2.5,160 2.5,152 Z" fill="#d6d7db" stroke="#cfd0d5" stroke-width="1"/>
<path d="M22.5,153 L10,160 Q2.5,163 2.5,170 V197.5 H22.5" fill="#eef0f3" stroke="#cfd1d6" stroke-width="1"/>
<circle cx="12.3" cy="175.5" r="4.6" fill="#f7d9db" stroke="#de5058" stroke-width="1.3"/><circle cx="12.3" cy="176" r="1.8" fill="none" stroke="#de5058" stroke-width="0.9"/>
<path d="M28.8,119.5 L34,114.1 H47 V132.0 H28.8 Z" fill="#fbeef0" stroke="#b9404a" stroke-width="1.4"/>
<path d="M28.8,119.5 L34,114.1 V117.5 Q33.5,119.5 31,119.5 Z" fill="#b9404a"/>
<path d="M40.5,121 H44 V124 H47 V127.5 H44 V130.5 H40.5 V127.5 H37.5 V124 H40.5 Z" stroke="#000" stroke-width="1.6" fill="none" />
<path d="M40.5,121 H44 V124 H47 V127.5 H44 V130.5 H40.5 V127.5 H37.5 V124 H40.5 Z" fill="#fff"/>
<path d="M40.5,121 H44 V124 H47 V127.5 H44 V130.5 H40.5 V127.5 H37.5 V124 H40.5 Z" stroke="#000" stroke-width="1.5" fill="none" />
<path d="M28.8,147.8 L34,142.4 H47 V160.3 H28.8 Z" fill="#fbeef0" stroke="#b9404a" stroke-width="1.4"/>
<path d="M28.8,147.8 L34,142.4 V145.8 Q33.5,147.8 31,147.8 Z" fill="#b9404a"/>
<g transform="translate(35.5,147.5) rotate(-28) scale(0.85)"><path d="M2.2,0 Q3.8,0 3.8,1.6 V6.2 Q5.3,5.6 6.3,6.6 Q7.8,6.1 8.8,7.1 Q10.3,6.9 10.8,8.2 V12.2 Q10.8,14.2 9.8,15.2 H3.8 L0.6,10.6 Q0,9.4 1.2,8.9 L1.2,9 V1.6 Q1.2,0 2.2,0 Z" fill="#fff" stroke="#000" stroke-width="1.15"/><rect x="3.6" y="15.6" width="6.6" height="2.6" fill="#fff" stroke="#000" stroke-width="1.1"/></g>
<path d="M28.8,175.5 L34,170.1 H47 V188.0 H28.8 Z" fill="#fbeef0" stroke="#b9404a" stroke-width="1.4"/>
<path d="M28.8,175.5 L34,170.1 V173.5 Q33.5,175.5 31,175.5 Z" fill="#b9404a"/>
<g transform="translate(36.8,176.5) scale(0.9)"><path d="M0,3 Q0,0 3,0.5 L11,9 L8,12.5 L0.5,4.5 Z" fill="#fff" stroke="#000" stroke-width="1.2"/><path d="M11,9 L12.5,11 L10,13.5 L8,12.5 Z" fill="#fff" stroke="#000" stroke-width="1.3"/></g>
<path d="M26,196.5 H48" stroke="url(#sepg)" stroke-width="1"/>
<path d="M26,202.5 H48" stroke="url(#sepg)" stroke-width="1"/>
<path d="M38.3,210 H45.5 V213.5 H41.2 V228.5 H38.3 Z" fill="#b9404a"/>
<path d="M32,212.3 H38" stroke="#000" stroke-width="1.2" fill="none" />
<path d="M31.00,212.30 L33.60,210.70 L33.60,213.90Z" fill="#000"/>
<path d="M32,219.8 H38" stroke="#000" stroke-width="1.2" fill="none" />
<path d="M31.00,219.80 L33.60,218.20 L33.60,221.40Z" fill="#000"/>
<path d="M32,227 H38" stroke="#000" stroke-width="1.2" fill="none" />
<path d="M31.00,227.00 L33.60,225.40 L33.60,228.60Z" fill="#000"/>
<path d="M31.5,237.8 H38 V240.5 H34.5 V256.5 H31.5 Z" fill="#b9404a"/>
<g transform="translate(36,242.5) rotate(-28) scale(0.85)"><path d="M2.2,0 Q3.8,0 3.8,1.6 V6.2 Q5.3,5.6 6.3,6.6 Q7.8,6.1 8.8,7.1 Q10.3,6.9 10.8,8.2 V12.2 Q10.8,14.2 9.8,15.2 H3.8 L0.6,10.6 Q0,9.4 1.2,8.9 L1.2,9 V1.6 Q1.2,0 2.2,0 Z" fill="#fff" stroke="#000" stroke-width="1.15"/><rect x="3.6" y="15.6" width="6.6" height="2.6" fill="#fff" stroke="#000" stroke-width="1.1"/></g>
<path d="M31.5,266 H38 V268.8 H34.5 V285 H31.5 Z" fill="#b9404a"/>
<g transform="translate(36.5,272.5) scale(0.9)"><path d="M0,3 Q0,0 3,0.5 L11,9 L8,12.5 L0.5,4.5 Z" fill="#fff" stroke="#000" stroke-width="1.2"/><path d="M11,9 L12.5,11 L10,13.5 L8,12.5 Z" fill="#fff" stroke="#000" stroke-width="1.3"/></g>
<defs><linearGradient id="cmb" x1="0" x2="1"><stop offset="0" stop-color="#b9404a"/><stop offset="1" stop-color="#b9404a" stop-opacity="0.1"/></linearGradient></defs>
<path d="M30,296 H47 V298.5 H45 V306 H43.5 V298.5 H40 V309 H38 V298.5 H35 V312 H33 V298.5 H32.5 V313 H30 Z" fill="url(#cmb)"/>
<path d="M30,296 H36 V298.5 H32.5 V313 H30 Z" fill="#b9404a"/>
<path d="M27.8,330.7 L41.7,322.8" stroke="#d9606a" stroke-width="1.8" fill="none" />
<path d="M32,335 L45.4,327" stroke="#d9606a" stroke-width="1.8" fill="none" />
<path d="M35.7,338.5 L49,330.7" stroke="#d9606a" stroke-width="1.8" fill="none" />
<path d="M29.8,350.3 H36.5 Q37.5,350.3 37.5,352 V358.2 A3.4,3.4 0 1 0 40.5,358.2 V352 Q40.5,350.3 41.5,350.3 H48 V368.5 H29.8 Z" fill="#fbeef0" stroke="#b9404a" stroke-width="1.3"/>
<path d="M29.8,378.2 H40 Q41.5,384.5 47.8,386 V396.2 H29.8 Z" fill="#fbeef0" stroke="#b9404a" stroke-width="1.3"/>
<rect x="28.500000000000004" y="408.5" width="8.4" height="3.6" rx="1.8" fill="#fff" stroke="#b9404a" stroke-width="1.3"/>
<rect x="40.5" y="408.5" width="8.4" height="3.6" rx="1.8" fill="#fff" stroke="#b9404a" stroke-width="1.3"/>
<rect x="28.500000000000004" y="418.4" width="8.4" height="3.6" rx="1.8" fill="#fff" stroke="#b9404a" stroke-width="1.3"/>
<rect x="40.5" y="418.4" width="8.4" height="3.6" rx="1.8" fill="#fff" stroke="#b9404a" stroke-width="1.3"/>
<path d="M36,437 L39.2,433.2 L49.3,446 L46,450 Z" fill="#e07880" stroke="#000" stroke-width="1.1"/>
<circle cx="31" cy="446.5" r="2.7" fill="none" stroke="#888" stroke-width="0.9"/><path d="M28,443.5 L34,449.5 M34,443.5 L28,449.5" stroke="#888" stroke-width="0.8"/>
<path d="M26,460.5 H48" stroke="url(#sepg)" stroke-width="1"/>
<path d="M26,466.5 H48" stroke="url(#sepg)" stroke-width="1"/>
<path d="M33.4,473 V479 L37.6,483.2 L33.4,487.4 V492" stroke="#2a2a2a" stroke-width="1.5" fill="none" />
<path d="M41,473 V479 L45.2,483.2 L41,487.4 V492" stroke="#2a2a2a" stroke-width="1.5" fill="none" />
<path d="M33.4,501.5 V506.5 L37,510.5 L33.4,514.5 V520.5" stroke="#9aa" stroke-width="1.2" fill="none" />
<path d="M39.6,501.5 V506.5 L44,511.0" stroke="#333" stroke-width="1.4" fill="none" />
<path d="M37.2,509.7 L46.3,519.0 M46.3,509.7 L37.2,519.0" stroke="#5a0a10" stroke-width="3.4" fill="none" />
<path d="M37.2,509.7 L46.3,519.0 M46.3,509.7 L37.2,519.0" stroke="#d0141e" stroke-width="2.2" fill="none" />
<path d="M33.4,528.5 V533.5 L37,537.5 L33.4,541.5 V547.5" stroke="#333" stroke-width="1.2" fill="none" />
<path d="M39.6,528.5 V533.5 L44,538.0" stroke="#333" stroke-width="1.4" fill="none" />
<path d="M37.2,536.7 L46.3,546.0 M46.3,536.7 L37.2,546.0" stroke="#5a0a10" stroke-width="3.4" fill="none" />
<path d="M37.2,536.7 L46.3,546.0 M46.3,536.7 L37.2,546.0" stroke="#d0141e" stroke-width="2.2" fill="none" />
<path d="M26,556.5 H48" stroke="url(#sepg)" stroke-width="1"/>
<path d="M26,562.5 H48" stroke="url(#sepg)" stroke-width="1"/>
<path d="M40.5,574.5 L47.5,571.5 L44.5,587.5 L37,588 Z" fill="#fbeef0" stroke="#b9404a" stroke-width="1.1"/>
<path d="M29,582 L40.5,574.5 L37,588 Z" stroke="#222" stroke-width="1.1" fill="none" />
<path d="M29,582 L44.5,587.5" stroke="#222" stroke-width="0.9" fill="none" />
<path d="M40.5,601 L47.5,598 L46.5,612 L40,612 Z" fill="#fbeef0" stroke="#b9404a" stroke-width="1.1"/>
<path d="M29,606 L40.5,601 L38,612 Z" stroke="#222" stroke-width="1.1" fill="none" />
<g transform="translate(35,602) rotate(-28) scale(0.7)"><path d="M2.2,0 Q3.8,0 3.8,1.6 V6.2 Q5.3,5.6 6.3,6.6 Q7.8,6.1 8.8,7.1 Q10.3,6.9 10.8,8.2 V12.2 Q10.8,14.2 9.8,15.2 H3.8 L0.6,10.6 Q0,9.4 1.2,8.9 L1.2,9 V1.6 Q1.2,0 2.2,0 Z" fill="#fff" stroke="#000" stroke-width="1.15"/><rect x="3.6" y="15.6" width="6.6" height="2.6" fill="#fff" stroke="#000" stroke-width="1.1"/></g>
<rect x="28.8" y="624.5" width="19.5" height="19.5" fill="#fff" stroke="#000" stroke-width="1.4"/>
<rect x="31" y="627" width="7" height="7" fill="#7a7a7a" opacity="0.6"/><rect x="40" y="627" width="6" height="6" fill="#999" opacity="0.5"/>
<g transform="translate(33.5,630) rotate(-28) scale(0.85)"><path d="M2.2,0 Q3.8,0 3.8,1.6 V6.2 Q5.3,5.6 6.3,6.6 Q7.8,6.1 8.8,7.1 Q10.3,6.9 10.8,8.2 V12.2 Q10.8,14.2 9.8,15.2 H3.8 L0.6,10.6 Q0,9.4 1.2,8.9 L1.2,9 V1.6 Q1.2,0 2.2,0 Z" fill="#fff" stroke="#000" stroke-width="1.15"/><rect x="3.6" y="15.6" width="6.6" height="2.6" fill="#fff" stroke="#000" stroke-width="1.1"/></g>
<rect x="28.8" y="656.5" width="19.2" height="13.5" fill="#fff" stroke="#000" stroke-width="1.4"/>
<path d="M28.8,661 H48 M28.8,665.5 H48" stroke="#000" stroke-width="1.1" fill="none" />
<path d="M36,658.5 H41" stroke="#666" stroke-width="0.7" fill="none" />
<path d="M26,680.5 H48" stroke="url(#sepg)" stroke-width="1"/>
<path d="M26,686.5 H48" stroke="url(#sepg)" stroke-width="1"/>
<path d="M38.5,693 V703" stroke="#d0141e" stroke-width="1.4" fill="none" />
<path d="M28,699.5 H36.5 M41,699.5 H49" stroke="#000" stroke-width="1.2" fill="none" />
<path d="M37.50,699.50 L34.50,701.50 L34.50,697.50Z" fill="#000"/>
<path d="M40.00,699.50 L43.00,697.50 L43.00,701.50Z" fill="#000"/>
<g transform="translate(36.5,702.5) rotate(-28) scale(0.62)"><path d="M2.2,0 Q3.8,0 3.8,1.6 V6.2 Q5.3,5.6 6.3,6.6 Q7.8,6.1 8.8,7.1 Q10.3,6.9 10.8,8.2 V12.2 Q10.8,14.2 9.8,15.2 H3.8 L0.6,10.6 Q0,9.4 1.2,8.9 L1.2,9 V1.6 Q1.2,0 2.2,0 Z" fill="#fff" stroke="#000" stroke-width="1.15"/><rect x="3.6" y="15.6" width="6.6" height="2.6" fill="#fff" stroke="#000" stroke-width="1.1"/></g>
<path d="M38.5,720 V730" stroke="#d0141e" stroke-width="1.4" fill="none" />
<path d="M28,726.5 H36.5 M41,726.5 H49" stroke="#000" stroke-width="1.2" fill="none" />
<path d="M37.50,726.50 L34.50,728.50 L34.50,724.50Z" fill="#000"/>
<path d="M40.00,726.50 L43.00,724.50 L43.00,728.50Z" fill="#000"/>
<circle cx="38" cy="735" r="3.6" fill="#fff" stroke="#000" stroke-width="1.6"/>
<path d="M40.5,737.5 L43.5,740.5" stroke="#000" stroke-width="1.8" fill="none" />
<path d="M26,748.5 H48" stroke="url(#sepg)" stroke-width="1"/>
<path d="M26,754.5 H48" stroke="url(#sepg)" stroke-width="1"/>
<path d="M29,763 H31" stroke="#000" stroke-width="1.3" fill="none" />
<path d="M33,763 H46" stroke="#000" stroke-width="1.2" fill="none" />
<path d="M29,766.5 H31" stroke="#000" stroke-width="1.3" fill="none" />
<path d="M33,766.5 H46" stroke="#000" stroke-width="1.2" fill="none" />
<path d="M29,770 H31" stroke="#000" stroke-width="1.3" fill="none" />
<path d="M33,770 H46" stroke="#000" stroke-width="1.2" fill="none" />
<path d="M29,773.5 H31" stroke="#000" stroke-width="1.3" fill="none" />
<path d="M33,773.5 H46" stroke="#000" stroke-width="1.2" fill="none" />
<path d="M29,777 H31" stroke="#000" stroke-width="1.3" fill="none" />
<path d="M33,777 H46" stroke="#000" stroke-width="1.2" fill="none" />
<path d="M37,772.5 L46,781.5 M46,772.5 L37,781.5" stroke="#d0141e" stroke-width="2.8" fill="none" />
<path d="M29,792.5 H31" stroke="#000" stroke-width="1.3" fill="none" />
<path d="M33,792.5 H45" stroke="#000" stroke-width="1.2" fill="none" />
<path d="M29,796 H31" stroke="#000" stroke-width="1.3" fill="none" />
<path d="M33,796 H45" stroke="#000" stroke-width="1.2" fill="none" />
<path d="M29,799.5 H31" stroke="#000" stroke-width="1.3" fill="none" />
<path d="M33,799.5 H45" stroke="#000" stroke-width="1.2" fill="none" />
<path d="M29,803 H31" stroke="#000" stroke-width="1.3" fill="none" />
<path d="M33,803 H45" stroke="#000" stroke-width="1.2" fill="none" />
<path d="M29,806.5 H31" stroke="#000" stroke-width="1.3" fill="none" />
<path d="M33,806.5 H45" stroke="#000" stroke-width="1.2" fill="none" />
<circle cx="41" cy="804" r="4" fill="#fff" stroke="#000" stroke-width="1.7"/>
<path d="M44,807 L47,810" stroke="#000" stroke-width="1.9" fill="none" />
<path d="M26,816.5 H48" stroke="url(#sepg)" stroke-width="1"/>
<path d="M26,822.5 H48" stroke="url(#sepg)" stroke-width="1"/>
<path d="M28.5,838 L44.5,831.5 M28.5,843 L44.5,836.5" stroke="#d8505a" stroke-width="1.5" fill="none" />
<circle cx="41.5" cy="843" r="5.7" fill="#fff" stroke="#000" stroke-width="1.2"/>
<path d="M41.5,841.5 V846" stroke="#000" stroke-width="1.3"/><circle cx="41.5" cy="839.5" r="0.8" fill="#000"/>
<circle cx="38.5" cy="858.5" r="2.2" fill="none" stroke="#000" stroke-width="1.1"/>
<path d="M33,861 H44 L48.5,876.5 H28.5 Z" fill="#fff" stroke="#000" stroke-width="1.2"/>
<circle cx="38.5" cy="869" r="4.2" fill="none" stroke="#000" stroke-width="1"/><path d="M38.5,868 V872" stroke="#000" stroke-width="1.1"/><circle cx="38.5" cy="866.3" r="0.7" fill="#000"/>
<path d="M26,884.5 H48" stroke="url(#sepg)" stroke-width="1"/>
<path d="M26,890.5 H48" stroke="url(#sepg)" stroke-width="1"/>
<path d="M38.50,897.50 L41.50,901.00 L35.50,901.00Z" fill="#111"/>
<path d="M38.50,918.00 L35.50,914.50 L41.50,914.50Z" fill="#111"/>
<path d="M28.30,908.00 L31.80,905.00 L31.80,911.00Z" fill="#111"/>
<path d="M48.50,908.00 L45.00,911.00 L45.00,905.00Z" fill="#111"/>
<path d="M45.96,934.56 L48.25,936.26 L47.88,938.14 L45.11,938.84 L44.30,940.06 L44.72,942.88 L43.12,943.94 L40.68,942.48 L39.24,942.76 L37.54,945.05 L35.66,944.68 L34.96,941.91 L33.74,941.10 L30.92,941.52 L29.86,939.92 L31.32,937.48 L31.04,936.04 L28.75,934.34 L29.12,932.46 L31.89,931.76 L32.70,930.54 L32.28,927.72 L33.88,926.66 L36.32,928.12 L37.76,927.84 L39.46,925.55 L41.34,925.92 L42.04,928.69 L43.26,929.50 L46.08,929.08 L47.14,930.68 L45.68,933.12Z" fill="none" stroke="#d0454d" stroke-width="1.4" stroke-linejoin="round"/>
<circle cx="38.5" cy="935.3" r="3" fill="none" stroke="#d0454d" stroke-width="1.4"/>
</svg>
<!-- /SIDE -->
<!-- DIAGRAM -->
<svg style="left:0;top:0" width="2041" height="1242" viewBox="0 0 2041 1242">
<defs><clipPath id="cb"><rect x="800" y="440" width="600" height="287"/></clipPath></defs>
<path clip-path="url(#cb)" fill="#f1d6cb" fill-rule="evenodd" d="M835.5,456 L1293,456 Q1285.5,597.5 1237.5,739 L890.5,739 Q843,597.5 835.5,456 Z M902,484 L1228,484 A24,26 0 0 1 1252,510 Q1244,600 1214.5,690 A14,14 0 0 1 1201,699.5 L927,699.5 A14,14 0 0 1 913,690 Q884,600 876.5,510 A25.5,26 0 0 1 902,484 Z"/>
<g stroke="#e38b75" stroke-width="4" fill="none">
<path d="M834,456 H1294"/>
<path d="M889.5,727 H1238.5"/>
<path d="M835.5,455 Q843,597.5 890.5,739"/>
<path d="M1293,455 Q1285.5,597.5 1237.5,739"/>
</g>
<g stroke="#6e0f2f" stroke-width="1.7" fill="none">
<path d="M1061,443 V503 M1048,458 H1074 M1048,484 H1074"/>
<path d="M1061,684 V744 M1048,699.5 H1074 M1048,725.5 H1074"/>
<path d="M840,594.4 L863,589.9 M878,587 L902.6,582.1 M852,586 L854,595.5 M887,581.5 L889,591"/>
<path d="M1225.8,584.4 L1249,588.3 M1264,590.9 L1289.2,595.1 M1239.6,581.8 L1238,591.5 M1274.8,587.2 L1273.2,597"/>
<path d="M876.5,511 A25.5,26 0 0 1 902,484"/>
<path d="M1228,484 A24,26 0 0 1 1252,510"/>
<path d="M913,690 A14,14 0 0 0 927,700"/>
<path d="M1201,700 A14,14 0 0 0 1214.5,690.5"/>
<path d="M1283.5,460.5 A4,4 0 0 1 1287.5,464.5" stroke-width="1.5"/>
<path d="M909.5,514.7 L892,496"/>
<path d="M1218,515 L1235.5,496"/>
<path d="M949,675.4 L926,689.5"/>
<path d="M1178,675.4 L1201,689.5"/>
<path d="M1275.5,489 L1285,470"/>
</g>
<g fill="#6e0f2f">
<path d="M1057,448.5 L1065,448.5 L1061,458 Z"/>
<path d="M1057,493.5 L1065,493.5 L1061,484 Z"/>
<path d="M1057,690 L1065,690 L1061,699.5 Z"/>
<path d="M1057,735 L1065,735 L1061,725.5 Z"/>
<path d="M853,590.6 L843.5,588.2 L845.2,596.6 Z"/>
<path d="M888,586 L897.8,579.5 L899.4,588 Z"/>
<path d="M1238.8,586.6 L1228.6,580.7 L1227.2,589.4 Z"/>
<path d="M1274,592 L1283.6,588.3 L1282.2,597 Z"/>
<path d="M887.5,491.5 L889.5,502 L898,494 Z"/>
<path d="M1239.8,491.5 L1229.5,494 L1237.5,502.5 Z"/>
<path d="M921,692.3 L926.5,683.5 L931.5,691.5 Z"/>
<path d="M1205.8,692.3 L1195.5,691.5 L1200.5,683.5 Z"/>
<path d="M1287.8,464.2 L1281,471 L1289,474 Z"/>
<circle cx="909.5" cy="514.7" r="2.8"/>
<circle cx="1218" cy="515" r="2.8"/>
<circle cx="949" cy="675.4" r="2.8"/>
<circle cx="1178" cy="675.4" r="2.8"/>
<circle cx="1275.5" cy="489" r="2.8"/>
</g>
<g fill="#6e0f2f" font-family="Liberation Sans" font-size="15.5">
<text x="1067.5" y="477.5">A</text>
<text x="1066.5" y="718.5">C</text>
<text x="865" y="594">D</text>
<text x="1251" y="595" transform="translate(1251,595) skewX(-10) translate(-1251,-595)">B</text>
<text x="914" y="534">R<tspan font-size="10">4</tspan></text>
<text x="1201.5" y="534">R<tspan font-size="10">1</tspan></text>
<text x="955" y="673.5">R<tspan font-size="10">3</tspan></text>
<text x="1153" y="673.5">R<tspan font-size="10">2</tspan></text>
<text x="1266.5" y="506.5">R<tspan font-size="10">5</tspan></text>
</g>
<circle cx="836" cy="407.6" r="11.8" fill="#6b6b6b"/>
<rect x="833.8" y="405" width="4.4" height="11.7" fill="#fff"/>
<circle cx="836" cy="400.8" r="2.2" fill="#fff"/>
<path d="M821,356.6 H826.5 L828.5,359 Q829.6,361 829.3,364 Q828.8,367.8 825,368 H822.5 Q819,367.8 818.6,364.5 Q818.2,361 819,359 Z" fill="#e2686e" stroke="#8f2a33" stroke-width="1"/>
<path d="M821.2,359.5 V366 M826.8,359.5 V366" stroke="#f6a0a4" stroke-width="1.2"/><path d="M823.3,358.8 H825.8 M824,360 V367.5" stroke="#b22a33" stroke-width="1"/>
</svg>
<!-- /DIAGRAM -->

<!-- FORM -->
<div class="lbl" style="left:1326px;top:395px">Material :</div>
<div class="tb" style="left:1383px;top:392px;width:144px;height:21px;border-color:#7a7a7a;padding-left:2px;line-height:19px"><span style="display:inline-block;transform:scaleX(0.914);transform-origin:0 50%">Aluminium 5083</span></div>
<svg style="left:1513.5px;top:400px" width="10" height="7"><path d="M0.5,0.5 L4,4.2 L7.7,0.5" stroke="#505050" stroke-width="1.25" fill="none"/></svg>
<div class="lbl" style="left:1393px;top:447px"><span style="display:inline-block;transform:scaleX(0.96);transform-origin:0 50%">A :</span></div>
<div class="tb" style="left:1427px;top:444px;width:100px;border-color:#2a5670"><span style="display:inline-block;background:#0b5cae;color:#fff;width:18px;height:13px;line-height:13px;margin-top:2px;vertical-align:top"><span style="display:inline-block;transform:scaleX(0.95);transform-origin:0 50%">100</span></span></div>
<div class="lbl" style="left:1393px;top:473px"><span style="display:inline-block;transform:scaleX(0.96);transform-origin:0 50%">B :</span></div>
<div class="tb" style="left:1427px;top:470px;width:100px"><span style="display:inline-block;transform:scaleX(0.95);transform-origin:0 50%">100</span></div>
<div class="lbl" style="left:1393px;top:499px"><span style="display:inline-block;transform:scaleX(0.96);transform-origin:0 50%">C :</span></div>
<div class="tb" style="left:1427px;top:496px;width:100px"><span style="display:inline-block;transform:scaleX(0.95);transform-origin:0 50%">100</span></div>
<div class="lbl" style="left:1393px;top:525px"><span style="display:inline-block;transform:scaleX(0.96);transform-origin:0 50%">D :</span></div>
<div class="tb" style="left:1427px;top:522px;width:100px"><span style="display:inline-block;transform:scaleX(0.95);transform-origin:0 50%">100</span></div>
<div class="lbl" style="left:1393px;top:551px"><span style="display:inline-block;transform:scaleX(0.96);transform-origin:0 50%">R1 :</span></div>
<div class="tb" style="left:1427px;top:548px;width:100px"><span style="display:inline-block;transform:scaleX(0.95);transform-origin:0 50%">150</span></div>
<div class="lbl" style="left:1393px;top:577px"><span style="display:inline-block;transform:scaleX(0.96);transform-origin:0 50%">R2 :</span></div>
<div class="tb" style="left:1427px;top:574px;width:100px"><span style="display:inline-block;transform:scaleX(0.95);transform-origin:0 50%">100</span></div>
<div class="lbl" style="left:1393px;top:603px"><span style="display:inline-block;transform:scaleX(0.96);transform-origin:0 50%">R3 :</span></div>
<div class="tb" style="left:1427px;top:600px;width:100px"><span style="display:inline-block;transform:scaleX(0.95);transform-origin:0 50%">100</span></div>
<div class="lbl" style="left:1393px;top:629px"><span style="display:inline-block;transform:scaleX(0.96);transform-origin:0 50%">R4 :</span></div>
<div class="tb" style="left:1427px;top:626px;width:100px"><span style="display:inline-block;transform:scaleX(0.95);transform-origin:0 50%">150</span></div>
<div class="lbl" style="left:1393px;top:655px"><span style="display:inline-block;transform:scaleX(0.96);transform-origin:0 50%">R5 :</span></div>
<div class="tb" style="left:1427px;top:652px;width:100px"><span style="display:inline-block;transform:scaleX(0.95);transform-origin:0 50%">25</span></div>
<div class="lbl" style="left:1301px;top:693px"><span style="display:inline-block;transform:scaleX(0.971);transform-origin:0 50%">Start Position :</span></div>
<div class="tb" style="left:1383px;top:690px;width:100px">0</div>
<div class="btn" style="left:1490px;top:687px;width:42px;height:24px;line-height:22px">Point</div>
<div class="lbl" style="left:1373px;top:714px;font-style:italic;font-size:10px">FrameNumber+Distance</div>
<div class="lbl" style="left:1344px;top:743px"><span style="display:inline-block;transform:scaleX(0.972);transform-origin:0 50%">Frame Space :</span></div>
<div class="tb" style="left:1427px;top:740px;width:100px"><span style="display:inline-block;transform:scaleX(0.95);transform-origin:0 50%">500</span></div>
<div class="lbl" style="left:1338.5px;top:769px"><span style="display:inline-block;transform:scaleX(0.965);transform-origin:0 50%">Frame Number :</span></div>
<div class="tb" style="left:1427px;top:766px;width:100px"><span style="display:inline-block;transform:scaleX(0.95);transform-origin:0 50%">10</span></div>
<div class="lbl" style="left:1359px;top:795px"><span style="display:inline-block;transform:scaleX(1.0);transform-origin:0 50%">Thickness :</span></div>
<div class="tb" style="left:1427px;top:792px;width:100px"><span style="display:inline-block;transform:scaleX(0.95);transform-origin:0 50%">8</span></div>
<div class="lbl" style="left:1348px;top:821px"><span style="display:inline-block;transform:scaleX(0.995);transform-origin:0 50%">Flatbar Type :</span></div>
<div class="tb" style="left:1427px;top:818px;width:100px"><span style="display:inline-block;transform:scaleX(0.913);transform-origin:0 50%">FB-80x8</span></div>
<div class="a" style="left:1427px;top:848px;width:13px;height:13px;background:#fff;border:1px solid #333"></div>
<div class="lbl" style="left:1445px;top:847px"><span style="display:inline-block;transform:scaleX(0.975);transform-origin:0 50%">Place Flatbar</span></div>
<div class="btn" style="left:1416px;top:870px;width:98px;height:21px;line-height:19px"><span style="display:inline-block;transform:scaleX(0.97)">Create Frames</span></div>
<!-- /FORM -->
</body></html>
